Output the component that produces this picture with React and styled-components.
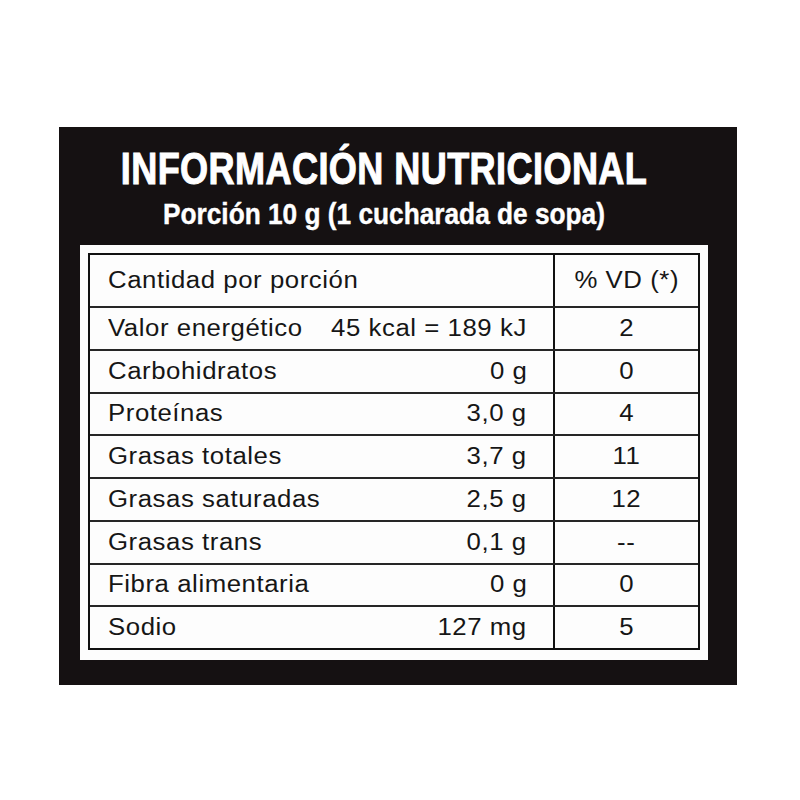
import React from "react";
import styled, { createGlobalStyle } from "styled-components";

const GlobalStyle = createGlobalStyle`
  html, body {
    margin: 0;
    padding: 0;
    background: #ffffff;
  }
  body {
    font-family: "Liberation Sans", Arial, sans-serif;
  }
`;

const rows = [
  { name: "Valor energético", amount: "45 kcal = 189 kJ", vd: "2" },
  { name: "Carbohidratos", amount: "0 g", vd: "0" },
  { name: "Proteínas", amount: "3,0 g", vd: "4" },
  { name: "Grasas totales", amount: "3,7 g", vd: "11" },
  { name: "Grasas saturadas", amount: "2,5 g", vd: "12" },
  { name: "Grasas trans", amount: "0,1 g", vd: "--" },
  { name: "Fibra alimentaria", amount: "0 g", vd: "0" },
  { name: "Sodio", amount: "127 mg", vd: "5" },
];

const App = () => {
  return (
    <Page>
      <GlobalStyle />
      <Label>
        <Header>
          <Title>INFORMACIÓN NUTRICIONAL</Title>
          <Subtitle>Porción 10 g (1 cucharada de sopa)</Subtitle>
        </Header>
        <Panel>
          <Table>
            <Row $head>
              <NameCell>
                <Text $origin="left">Cantidad por porción</Text>
              </NameCell>
              <VdCell>
                <Text $origin="center">% VD (*)</Text>
              </VdCell>
            </Row>
            {rows.map((r) => (
              <Row key={r.name}>
                <NameCell>
                  <Text $origin="left">{r.name}</Text>
                  <Text $origin="right">{r.amount}</Text>
                </NameCell>
                <VdCell>
                  <Text $origin="center">{r.vd}</Text>
                </VdCell>
              </Row>
            ))}
          </Table>
        </Panel>
      </Label>
    </Page>
  );
};

const Page = styled.div`
  padding: 127px 0 0 59px;
  width: 800px;
  height: 800px;
  box-sizing: border-box;
`;

const Label = styled.div`
  width: 678px;
  background: #151112;
  display: flex;
  flex-direction: column;
  padding-bottom: 25px;
`;

const Header = styled.div`
  padding: 20px 28px 0 0;
  color: #ffffff;
  font-family: "Liberation Sans", Arial, sans-serif;
  font-weight: 700;
  text-align: center;
`;

const Title = styled.div`
  font-size: 44px;
  line-height: 44px;
  letter-spacing: 0.5px;
  -webkit-text-stroke: 1px #ffffff;
  transform: scaleX(0.82);
  white-space: nowrap;
`;

const Subtitle = styled.div`
  margin-top: 9px;
  font-size: 29px;
  line-height: 29px;
  -webkit-text-stroke: 0.4px #ffffff;
  transform: scaleX(0.905);
  white-space: nowrap;
`;

const Panel = styled.div`
  margin: 16px 29px 0 21px;
  background: #fdfdfd;
  padding: 8px 8px 10px 8px;
`;

const Table = styled.div`
  border: 2px solid #111;
  display: flex;
  flex-direction: column;
  color: #161616;
  font-size: 23px;
  letter-spacing: 0.5px;
`;

const Row = styled.div`
  display: grid;
  grid-template-columns: 1fr 145px;
  height: ${(p) => (p.$head ? "51px" : "40.75px")};
  border-top: ${(p) => (p.$head ? "none" : "2px solid #262626")};
`;

const NameCell = styled.div`
  display: flex;
  align-items: center;
  justify-content: space-between;
  padding: 0 26px 0 18px;
  white-space: nowrap;
`;

const VdCell = styled.div`
  display: flex;
  align-items: center;
  justify-content: center;
  border-left: 2px solid #111;
  white-space: nowrap;
`;

const Text = styled.span`
  display: inline-block;
  transform: scaleX(1.12);
  transform-origin: ${(p) => p.$origin} center;
`;

export default App;
